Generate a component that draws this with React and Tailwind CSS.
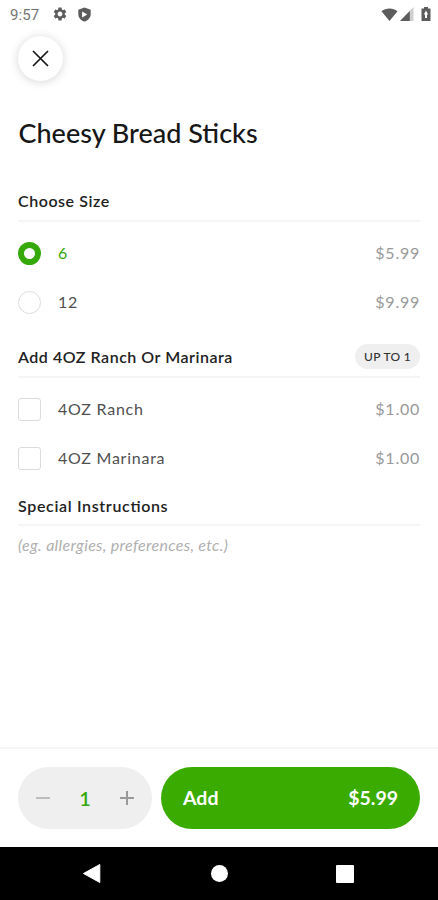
import { useState } from "react";
import { MdSettings } from "react-icons/md";

const sizes = [
  { id: "6", label: "6", price: 5.99 },
  { id: "12", label: "12", price: 9.99 },
];

const extras = [
  { id: "ranch", label: "4OZ Ranch", price: 1 },
  { id: "marinara", label: "4OZ Marinara", price: 1 },
];

const money = (value) => `$${value.toFixed(2)}`;

function StatusBar() {
  return (
    <div className="flex h-7 items-center pr-[7px] pl-[10px] text-[#5c5c5c]">
      <span className="w-[42px] pt-px font-['Roboto'] text-[15px] leading-4 tracking-[0.1px] text-[#757575]">
        9:57
      </span>
      <MdSettings className="size-4" />
      <svg className="ml-[9px] h-[15px] w-[15px]" viewBox="0 0 14 15" fill="currentColor">
        <path
          fillRule="evenodd"
          d="M7 0.5 13.2 2.8V7.2C13.2 10.7 10.6 13.5 7 14.6 3.4 13.5 0.8 10.7 0.8 7.2V2.8ZM4.6 4.4V10.4L9.8 7.4Z"
        />
      </svg>
      <svg className="ml-auto h-[13px] w-[17px]" viewBox="0 0 17 13" fill="currentColor">
        <path d="M0.5 3.2C5-0.4 12-0.4 16.5 3.2L8.5 13Z" />
      </svg>
      <svg className="ml-[2px] h-[14px] w-[14px]" viewBox="0 0 14 14">
        <path d="M13.5 0V14H0Z" fill="#cfcfcf" />
        <path d="M9.8 4V14H0Z" fill="currentColor" />
      </svg>
      <svg className="ml-[7px] h-[14px] w-[10px]" viewBox="0 0 10 14" fill="currentColor">
        <path
          fillRule="evenodd"
          d="M3 0H7V1.4H9.5V14H0.5V1.4H3ZM5 3.6 2.8 7.6H4V11H6V7.6H7.2Z"
        />
      </svg>
    </div>
  );
}

function Section({ title, badge, headerClass, children }) {
  return (
    <section>
      <div className={`flex items-center justify-between border-b-2 border-[#f5f5f5] ${headerClass}`}>
        <h2 className="text-[16px] leading-5 font-semibold text-[#222] [font-feature-settings:'liga']">
          {title}
        </h2>
        {badge ? (
          <span className="flex h-[25px] w-[65px] items-center justify-center rounded-full bg-[#efefef] text-[12px] font-medium tracking-[0.3px] text-[#333]">
            {badge}
          </span>
        ) : null}
      </div>
      {children}
    </section>
  );
}

function Row({ label, price, active, onClick, children }) {
  return (
    <button onClick={onClick} className="flex h-[49px] w-full items-center text-[16px] tracking-[0.75px]">
      {children}
      <span className={`-mt-[2px] ml-[17px] ${active ? "text-[#35a80a]" : "text-[#505050]"}`}>{label}</span>
      <span className="-mt-[2px] ml-auto text-[#999]">{money(price)}</span>
    </button>
  );
}

function NavBar() {
  return (
    <div className="flex h-[53px] items-center bg-black text-white">
      <svg className="ml-[83px] h-[19px] w-[18px]" viewBox="0 0 18 19" fill="currentColor">
        <path d="M16.8 0.5V18.5L0.5 9.5Z" stroke="currentColor" strokeLinejoin="round" />
      </svg>
      <span className="ml-[110px] size-[17px] rounded-full bg-white" />
      <span className="ml-[108px] size-[18px] rounded-[1px] bg-white" />
    </div>
  );
}

export default function App() {
  const [size, setSize] = useState("6");
  const [picked, setPicked] = useState(null);
  const [quantity, setQuantity] = useState(1);

  const base = sizes.find((item) => item.id === size).price;
  const total = (base + (picked ? 1 : 0)) * quantity;

  return (
    <div className="flex h-[900px] w-[438px] flex-col overflow-hidden bg-white font-['Lato','Liberation_Sans',sans-serif]">
      <StatusBar />

      <main className="flex-1 px-[18px] pt-[8px]">
        <button
          aria-label="Close"
          className="flex size-[45px] items-center justify-center rounded-full bg-white shadow-[0_1px_10px_rgba(0,0,0,0.17)]"
        >
          <svg className="size-[17px]" viewBox="0 0 17 17" fill="none" stroke="#171717" strokeWidth="1.7">
            <path d="M1 1 16 16M16 1 1 16" />
          </svg>
        </button>

        <h1 className="mt-[34px] ml-[0.5px] text-[27px] leading-9 font-medium text-[#171717]">
          Cheesy Bread Sticks
        </h1>

        <Section title="Choose Size" headerClass="mt-[31px] h-[40px] pb-[1px] tracking-[0.55px]">
          <div className="pt-[7px]">
            {sizes.map((item) => (
              <Row
                key={item.id}
                label={item.label}
                price={item.price}
                active={size === item.id}
                onClick={() => setSize(item.id)}
              >
                <span
                  className={`size-[23px] rounded-full ${
                    size === item.id ? "border-[6px] border-[#35a80a]" : "border border-[#dcdcdc]"
                  }`}
                />
              </Row>
            ))}
          </div>
        </Section>

        <Section
          title="Add 4OZ Ranch Or Marinara"
          badge="UP TO 1"
          headerClass="mt-[10px] h-[41px] tracking-[0.52px]"
        >
          <div className="pt-[7px]">
            {extras.map((item) => (
              <Row
                key={item.id}
                label={item.label}
                price={item.price}
                onClick={() => setPicked(picked === item.id ? null : item.id)}
              >
                <span
                  className={`size-[23px] rounded-[3px] border ${
                    picked === item.id ? "border-[#35a80a] bg-[#35a80a]" : "border-[#dcdcdc]"
                  }`}
                />
              </Row>
            ))}
          </div>
        </Section>

        <Section title="Special Instructions" headerClass="mt-[3px] h-[40px] pt-[2px] tracking-[0.66px]">
          <input
            className="mt-[7px] block h-6 w-full text-[16px] tracking-[0.31px] italic outline-none placeholder:text-[#b0b0b0]"
            placeholder="(eg. allergies, preferences, etc.)"
          />
        </Section>
      </main>

      <footer className="flex h-[100px] items-center gap-[9px] border-t-2 border-[#f5f5f5] px-[18px]">
        <div className="flex h-[62px] w-[134px] items-center justify-between rounded-full bg-[#efefef] px-[18px]">
          <button aria-label="Decrease" onClick={() => setQuantity(Math.max(1, quantity - 1))}>
            <svg className="size-[14px]" viewBox="0 0 14 14" stroke="#bdbdbd" strokeWidth="2">
              <path d="M0 7H14" />
            </svg>
          </button>
          <span className="text-[20px] font-semibold text-[#35a80a]">{quantity}</span>
          <button aria-label="Increase" onClick={() => setQuantity(quantity + 1)}>
            <svg className="size-[14px]" viewBox="0 0 14 14" stroke="#999" strokeWidth="2">
              <path d="M0 7H14M7 0V14" />
            </svg>
          </button>
        </div>
        <button className="flex h-[62px] flex-1 items-center justify-between rounded-full bg-[#3aab00] px-[22px] text-[19.5px] font-bold text-white">
          <span>Add</span>
          <span>{money(total)}</span>
        </button>
      </footer>

      <NavBar />
    </div>
  );
}
